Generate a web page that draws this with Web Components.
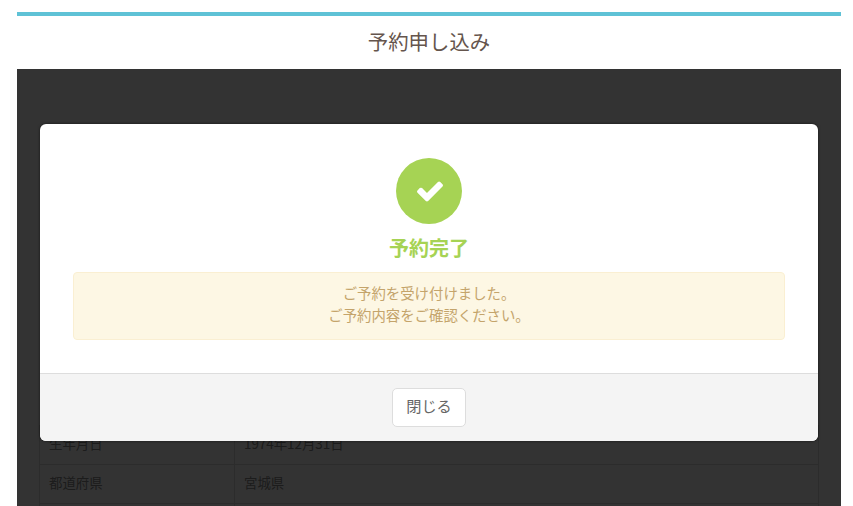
<!DOCTYPE html>
<html lang="ja">
<head>
<meta charset="utf-8">
<title>予約申し込み</title>
<style>
    html, body {
        margin: 0;
        height: 506px;
        overflow: hidden;
        background: #fff;
        font-family: "Noto Sans CJK JP", "Open Sans", sans-serif;
        color: #5a4a42;
    }
</style>
</head>
<body>
<booking-panel heading="予約申し込み">
    <info-row label="生年月日">1974年12月31日</info-row>
    <info-row label="都道府県">宮城県</info-row>
    <info-row label="" ></info-row>
    <done-dialog slot="overlay" heading="予約完了" action="閉じる">
        ご予約を受け付けました。<br>ご予約内容をご確認ください。
    </done-dialog>
</booking-panel>

<script>
class BookingPanel extends HTMLElement {
    connectedCallback() {
        let html = `
<style>
    :host {
        display: block;
        position: relative;
        margin: 12px 12px 0 17px;
        height: 494px;
        overflow: hidden;
        border-top: 4px solid #5fc2d6;
    }

    h1 {
        margin: 0;
        height: 53px;
        line-height: 50px;
        font-size: 20.4px;
        font-weight: 400;
        text-align: center;
        color: #65554d;
    }

    .content {
        background: #fff;
        padding: 356px 22px 0 22px;
    }

    .backdrop {
        position: absolute;
        left: 0;
        right: 0;
        top: 53px;
        bottom: 0;
        background: rgba(0, 0, 0, 0.8);
    }

    .backdrop ::slotted(*) {
        position: absolute;
        left: 23px;
        right: 23px;
        top: 55px;
    }
</style>
<h1>${this.getAttribute('heading')}</h1>
<div class="content"><slot></slot></div>
<div class="backdrop"><slot name="overlay"></slot></div>
        `;
        this.attachShadow({mode: 'open'}).innerHTML = html;
    }
}

class InfoRow extends HTMLElement {
    connectedCallback() {
        let html = `
<style>
    :host {
        display: grid;
        grid-template-columns: 195px 1fr;
        height: 38px;
        font-size: 13.4px;
        color: #8a8a8a;
        border: 1px solid #ddd;
        border-width: 1px 1px 0 1px;
    }

    div {
        padding: 0 9px;
        line-height: 35px;
    }

    .label {
        border-right: 1px solid #ddd;
    }
</style>
<div class="label">${this.getAttribute('label')}</div>
<div><slot></slot></div>
        `;
        this.attachShadow({mode: 'open'}).innerHTML = html;
    }
}

class DoneDialog extends HTMLElement {
    connectedCallback() {
        let html = `
<style>
    :host {
        display: block;
        background: #fff;
        border-radius: 6px;
        overflow: hidden;
        box-shadow: 0 0 3px rgba(0, 0, 0, 0.6);
    }

    .body {
        display: flex;
        flex-direction: column;
        align-items: center;
        height: 215px;
        padding: 34px 33px 0 33px;
    }

    svg {
        display: block;
    }

    h2 {
        margin: 7px 0 0 0;
        height: 33px;
        line-height: 33px;
        font-size: 20px;
        font-weight: 700;
        color: #a6d354;
    }

    .alert {
        align-self: stretch;
        margin-top: 8px;
        padding: 9px 0 13px 0;
        height: 44px;
        text-align: center;
        font-size: 14.4px;
        line-height: 22px;
        color: #c4a46b;
        background: #fdf7e4;
        border: 1px solid #faefd2;
        border-radius: 4px;
    }

    .footer {
        display: flex;
        justify-content: center;
        align-items: center;
        height: 67px;
        background: #f4f4f4;
        border-top: 1px solid #ddd;
    }

    button {
        width: 74px;
        height: 39px;
        padding: 0 0 5px 0;
        font: inherit;
        font-size: 15.2px;
        color: #666;
        background: #fff;
        border: 1px solid #ddd;
        border-radius: 5px;
    }
</style>
<div class="body">
    <svg width="66" height="66" viewBox="0 0 66 66" aria-hidden="true">
        <circle cx="33" cy="33" r="33" fill="#a6d354"/>
        <svg x="19" y="18" width="30" height="30" viewBox="0 0 1792 1792">
            <path fill="#fff" d="M1671 566q0 40-28 68l-724 724-136 136q-28 28-68 28t-68-28l-136-136-362-362q-28-28-28-68t28-68l136-136q28-28 68-28t68 28l294 295 656-657q28-28 68-28t68 28l136 136q28 28 28 68z"/>
        </svg>
    </svg>
    <h2>${this.getAttribute('heading')}</h2>
    <div class="alert"><slot></slot></div>
</div>
<div class="footer"><button>${this.getAttribute('action')}</button></div>
        `;
        this.attachShadow({mode: 'open'}).innerHTML = html;
    }
}

customElements.define('booking-panel', BookingPanel);
customElements.define('info-row', InfoRow);
customElements.define('done-dialog', DoneDialog);
</script>
</body>
</html>
